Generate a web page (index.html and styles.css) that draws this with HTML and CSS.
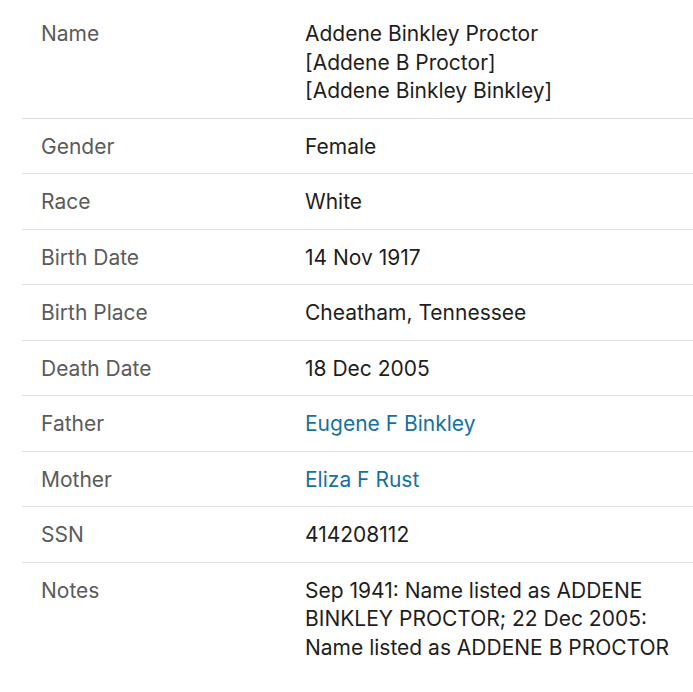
FILE: index.html
```html
<!DOCTYPE html>
<html>
<head>
<meta charset="utf-8">
<link rel="stylesheet" href="styles.css">
</head>
<body>
<div class="record">
  <div class="row">
    <div class="label">Name</div>
    <div class="value">Addene Binkley Proctor<br>[Addene B Proctor]<br>[Addene Binkley Binkley]</div>
  </div>
  <div class="row">
    <div class="label">Gender</div>
    <div class="value">Female</div>
  </div>
  <div class="row">
    <div class="label">Race</div>
    <div class="value">White</div>
  </div>
  <div class="row">
    <div class="label">Birth Date</div>
    <div class="value">14 Nov 1917</div>
  </div>
  <div class="row">
    <div class="label">Birth Place</div>
    <div class="value">Cheatham, Tennessee</div>
  </div>
  <div class="row">
    <div class="label">Death Date</div>
    <div class="value">18 Dec 2005</div>
  </div>
  <div class="row">
    <div class="label">Father</div>
    <div class="value"><a class="link" href="#">Eugene F Binkley</a></div>
  </div>
  <div class="row">
    <div class="label">Mother</div>
    <div class="value"><a class="link" href="#">Eliza F Rust</a></div>
  </div>
  <div class="row">
    <div class="label">SSN</div>
    <div class="value">414208112</div>
  </div>
  <div class="row last">
    <div class="label">Notes</div>
    <div class="value">Sep 1941: Name listed as ADDENE BINKLEY PROCTOR; 22 Dec 2005: Name listed as ADDENE B PROCTOR</div>
  </div>
</div>
</body>
</html>
```
FILE: styles.css
```css
html, body {
  margin: 0;
  padding: 0;
  background: #ffffff;
}
body {
  font-family: Inter, "Noto Sans", sans-serif;
  font-size: 21px;
  line-height: 28.5px;
  color: #1e1e1e;
}
.record {
  padding: 6px 0 0 22px;
}
.row {
  display: grid;
  grid-template-columns: 283px 1fr;
  padding: 14px 0 12px;
  border-bottom: 1px solid #e0e0e0;
}
.row.last {
  border-bottom: none;
}
.label {
  padding-left: 19px;
  color: #5b5b5b;
}
.value {
  padding-right: 4px;
}
.link {
  color: #17719f;
  text-decoration: none;
}
```
